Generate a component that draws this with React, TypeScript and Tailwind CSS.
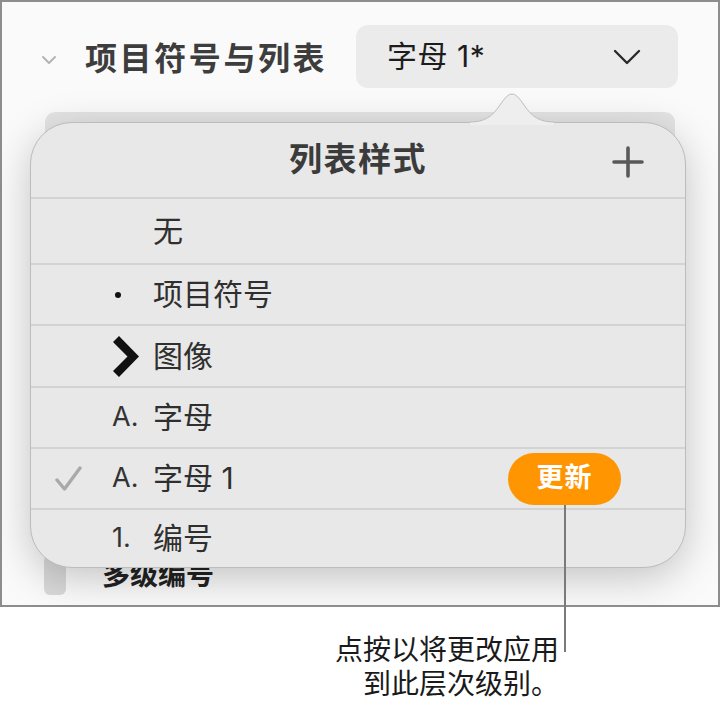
import React from "react";

function Check() {
  return (
    <svg width="28" height="26" viewBox="0 0 28 26" fill="none">
      <path d="M2 14 L9.5 23 L25 2" stroke="#a9a9a9" strokeWidth="3.4" strokeLinecap="round" strokeLinejoin="round" />
    </svg>
  );
}

function ImgBullet() {
  return (
    <svg width="28" height="41" viewBox="0 0 28 41">
      <polygon points="1,6 7,0 27,20.5 7,41 1,35 15.5,20.5" fill="#111" />
    </svg>
  );
}

export default function App() {
  const rows: { marker: React.ReactNode; label: string; h: string; checked?: boolean; update?: boolean }[] = [
    { marker: null, label: "无", h: "h-[66px]" },
    { marker: <span className="block h-[6px] w-[6px] rounded-full bg-[#111] ml-[3px]" />, label: "项目符号", h: "h-[61px]" },
    { marker: <ImgBullet />, label: "图像", h: "h-[62px]" },
    { marker: <span className="text-[27px] text-[#333]">A.</span>, label: "字母", h: "h-[61px]" },
    { marker: <span className="text-[27px] text-[#333]">A.</span>, label: "字母 1", h: "h-[61px]", checked: true, update: true },
    { marker: <span className="text-[27px] text-[#333]">1.</span>, label: "编号", h: "h-[59px]" },
  ];

  return (
    <div className="relative w-[721px] h-[708px] bg-white font-[Inter,'Noto_Sans_CJK_SC',sans-serif]">
      {/* framed panel */}
      <div className="relative w-[720px] h-[607px] border-2 border-[#8d8d8d] bg-[#fafafa] overflow-hidden">
        {/* header */}
        <div className="flex items-center pt-[23px] pl-[38px] pr-[40px]">
          <svg width="18" height="12" viewBox="0 0 18 12" fill="none" className="mt-[6px]">
            <path d="M3 3 L9 9 L15 3" stroke="#b4b4b4" strokeWidth="2" strokeLinecap="round" strokeLinejoin="round" />
          </svg>
          <div className="ml-[27px] text-[32px] font-bold tracking-[2.6px] text-[#3d3d3d] leading-none mt-[4px]">项目符号与列表</div>
          <div className="ml-auto flex h-[63px] w-[322px] items-center rounded-[12px] bg-[#ebebeb] pl-[31px] pr-[36px]">
            <span className="text-[30px] text-[#1d1d1d] tracking-[0.5px]">字母 1*</span>
            <svg width="30" height="18" viewBox="0 0 30 18" fill="none" className="ml-auto">
              <path d="M3 3 L15 15 L27 3" stroke="#2a2a2a" strokeWidth="2.4" strokeLinecap="round" strokeLinejoin="round" />
            </svg>
          </div>
        </div>

        {/* underlying content */}
        <div className="mx-[43px] mt-[24px] h-[60px] rounded-[10px] bg-[#e4e4e4]" />
        <div className="mt-[382px] flex items-center pl-[42px]">
          <div className="h-[40px] w-[22px] rounded-[6px] bg-[#d9d9d9]" />
          <span className="ml-[36px] text-[28px] font-semibold text-[#222]">多级编号</span>
        </div>

        {/* popover */}
        <div className="absolute left-[28px] top-[120px] w-[656px] h-[446px] z-10">
          <svg width="84" height="32" viewBox="0 0 84 32" className="absolute left-[440px] top-[-29px] z-20">
            <path d="M0 29 C14 29 22 24 30 12 C36 3 39 1 42 1 C45 1 48 3 54 12 C62 24 70 29 84 29 L84 32 L0 32 Z" fill="#eeeeee" />
            <path d="M0 29 C14 29 22 24 30 12 C36 3 39 1 42 1 C45 1 48 3 54 12 C62 24 70 29 84 29" fill="none" stroke="#bdbdbd" strokeWidth="1" />
          </svg>
          <div className="h-full w-full overflow-hidden rounded-[42px] border border-[#bcbcbc] bg-[#e8e8e8] shadow-[0_10px_40px_rgba(0,0,0,0.22)]">
            <div className="relative flex h-[74px] items-center justify-center">
              <span className="text-[33px] font-semibold text-[#3b3b3b] tracking-[1.5px]">列表样式</span>
              <svg width="34" height="34" viewBox="0 0 34 34" className="absolute right-[40px] top-[22px]">
                <path d="M17 3 V31 M3 17 H31" stroke="#595959" strokeWidth="3.6" strokeLinecap="round" />
              </svg>
            </div>
            {rows.map((r, i) => (
              <div key={i} className={`flex items-center border-t-2 border-[#d3d3d3] pl-[24px] ${r.h}`}>
                <div className="flex w-[57px] items-center">{r.checked ? <Check /> : null}</div>
                <div className="flex w-[41px] items-center">{r.marker}</div>
                <span className="text-[30px] text-[#2f2f2f]">{r.label}</span>
                {r.update ? (
                  <div className="ml-auto mr-[64px] flex h-[52px] w-[113px] items-center justify-center rounded-full bg-[#ff9500]">
                    <span className="text-[27px] font-bold text-white tracking-[1px]">更新</span>
                  </div>
                ) : null}
              </div>
            ))}
          </div>
        </div>
      </div>

      {/* callout line */}
      <div className="absolute left-[564px] top-[505px] z-30 h-[147px] w-[2px] bg-[#7a7a7a]" />

      {/* callout text */}
      <div className="mt-[26px] w-[559px] text-right text-[28px] leading-[34px] text-[#1a1a1a]">
        <div>点按以将更改应用</div>
        <div>到此层次级别。</div>
      </div>
    </div>
  );
}
